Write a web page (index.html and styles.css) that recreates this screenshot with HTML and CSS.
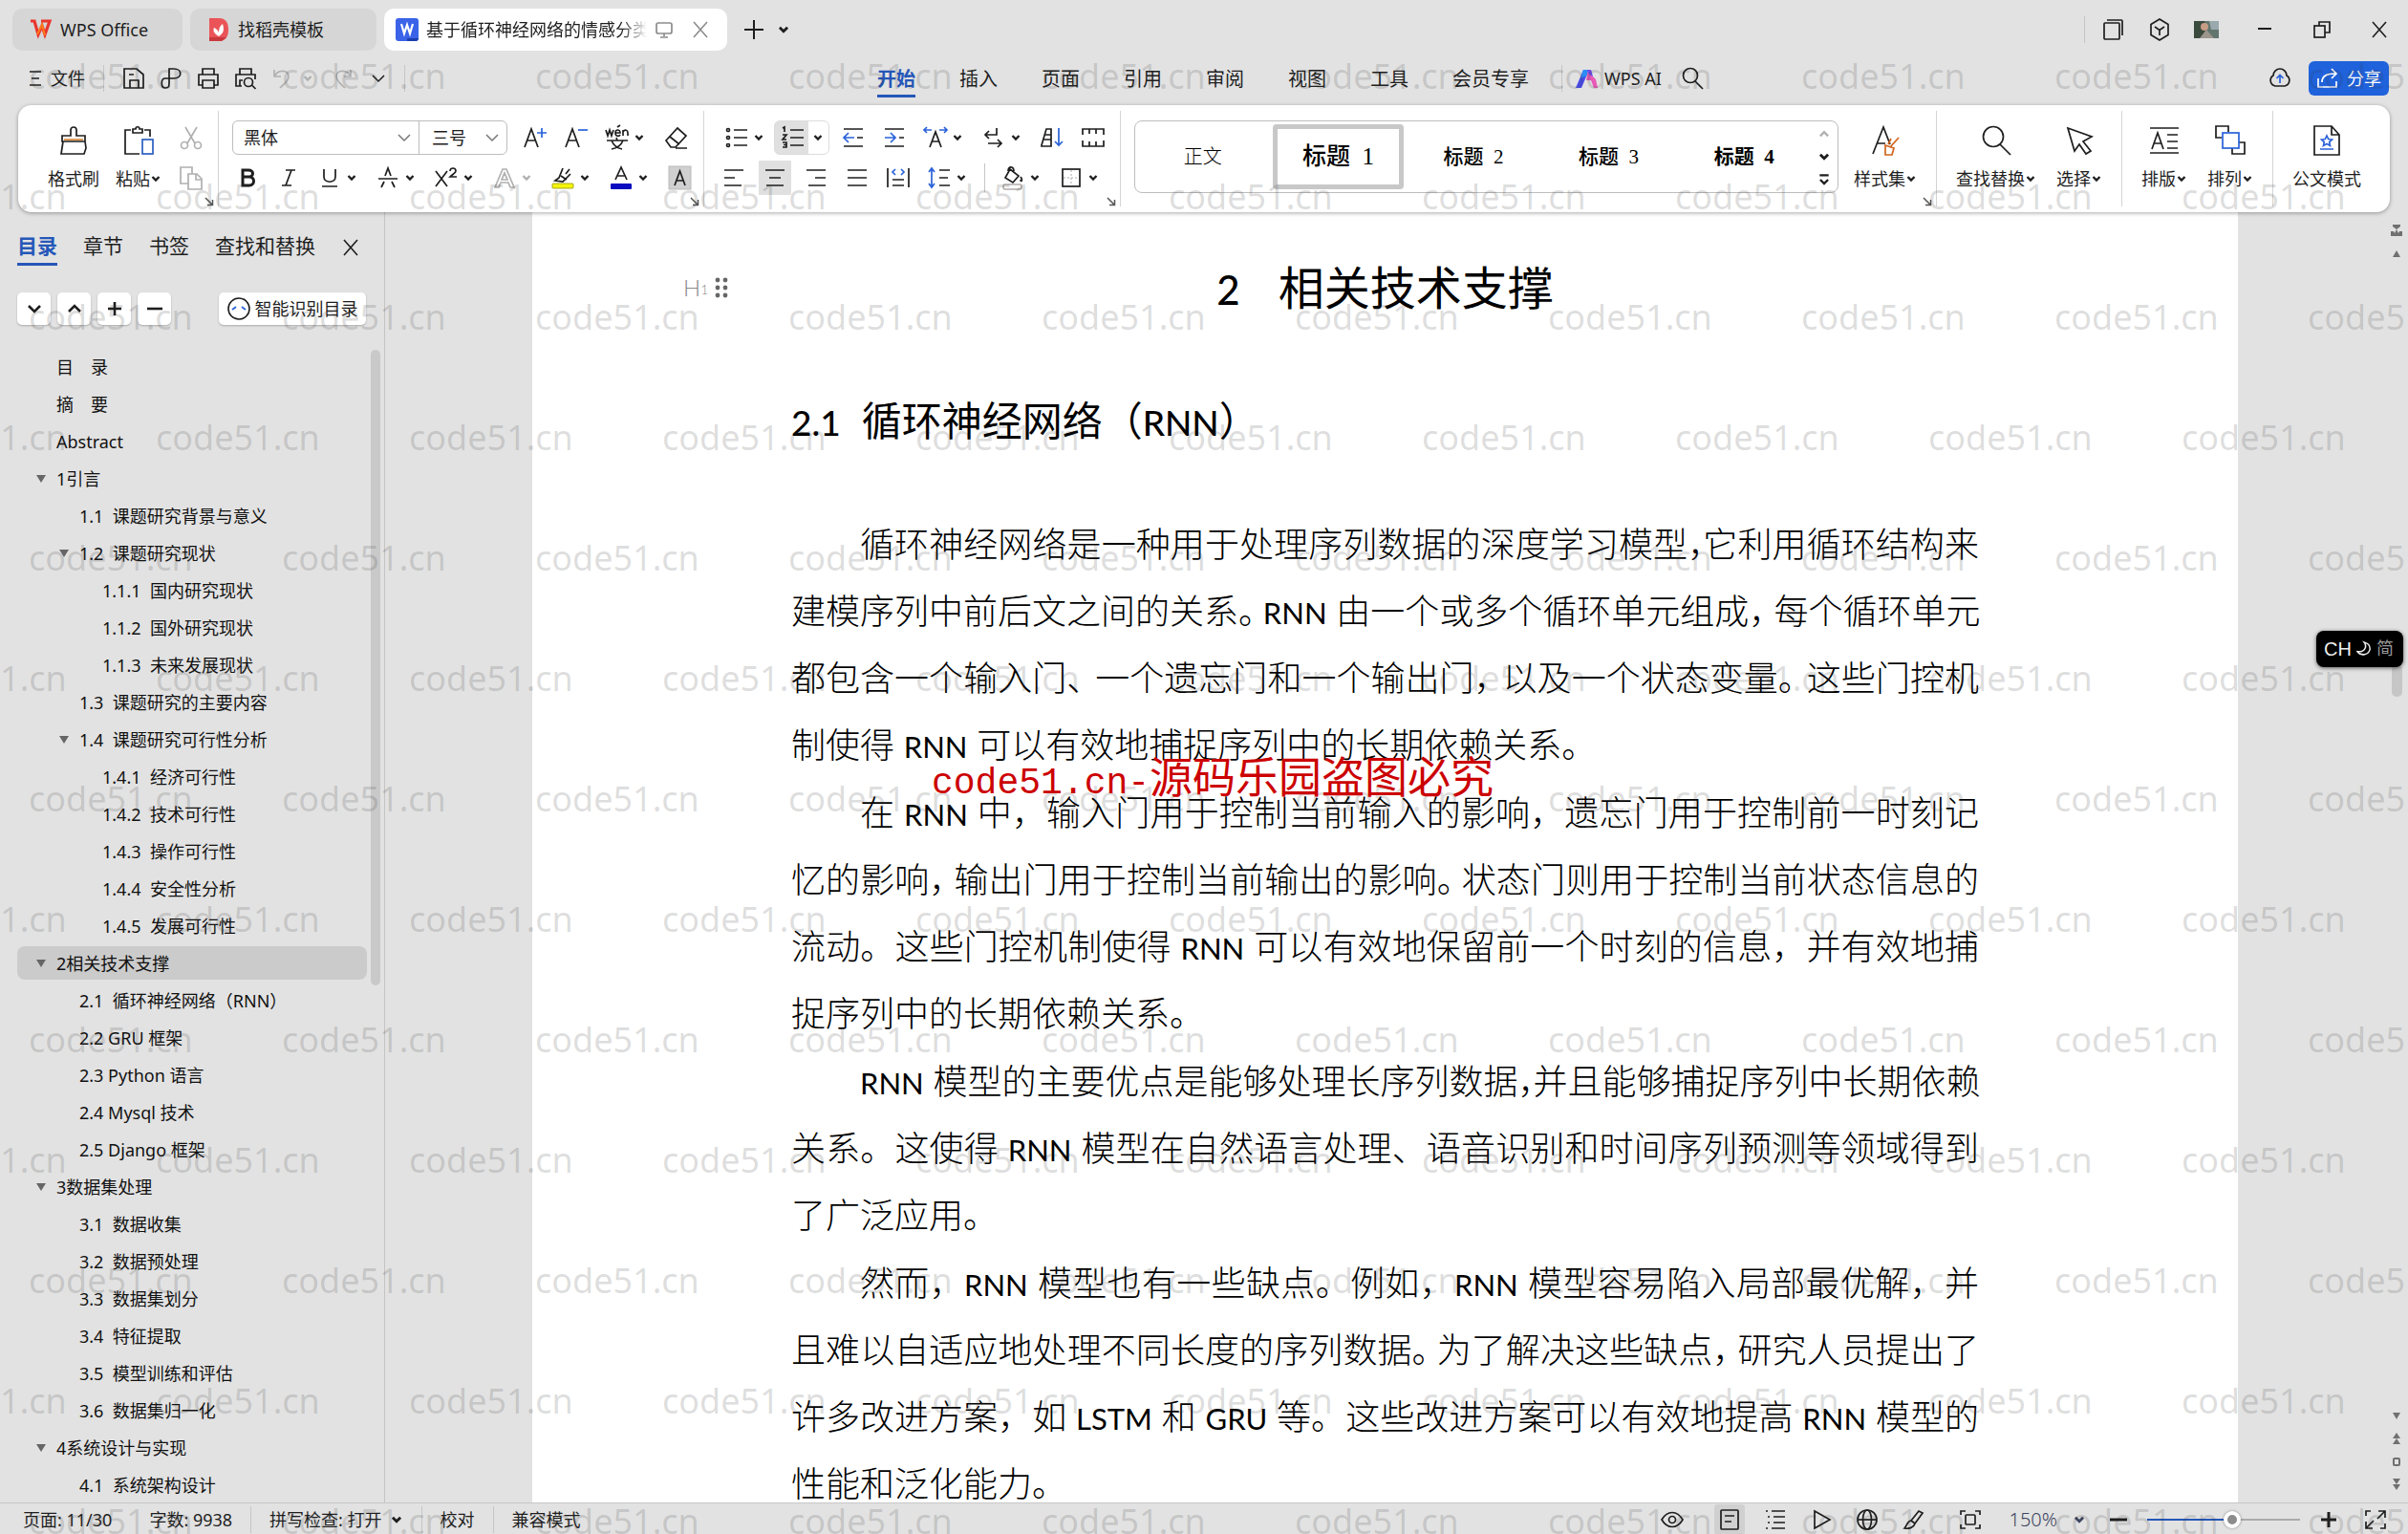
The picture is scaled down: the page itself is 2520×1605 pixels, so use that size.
FILE: index.html
```html
<!DOCTYPE html>
<html lang="zh-CN">
<head>
<meta charset="utf-8">
<title>WPS Office</title>
<link rel="stylesheet" href="styles.css">
</head>
<body>
<svg class="sprite" aria-hidden="true">
  <symbol id="chev" viewBox="0 0 12 12"><path d="M2.500 4l3.500 3.500 3.500-3.500" stroke-width="2.400"/></symbol>
  <symbol id="chev-thin" viewBox="0 0 16 16"><path d="M2 5l6 6 6-6" stroke-width="1.500"/></symbol>
  <symbol id="close" viewBox="0 0 20 20"><path d="M3 2l14 16M17 2L3 18" stroke-width="1.600"/></symbol>
  <symbol id="corner" viewBox="0 0 10 10"><path d="M1 1l7 7M8.500 3v5.500H3" stroke-width="1.500"/></symbol>
</svg>
<div class="app">
  <header class="titlebar">
    <div class="tabs">
      <button class="tab tab-home"><svg class="i24" viewBox="0 0 24 24"><path d="M1 3h4l4 14 4-9 3 9 5-14h-9" stroke="#e8352e" stroke-width="3.200"/><path d="M8 17l5-10 3 11" stroke="#ff7b1c" stroke-width="2"/></svg>WPS Office</button>
      <button class="tab tab-tpl"><svg class="i24" viewBox="0 0 24 24"><path d="M2 0h10c8 0 10 6 10 12s-2 12-10 12H2z" fill="#ea5459" stroke="none"/><path d="M2 20h18l-5 4H2z" fill="#c9383e" stroke="none"/><path d="M12 19C6 16 6 12 7 10c3 1 4 3 5 5 0-4 1-7 4-9 2 6 1 10-4 13z" fill="#fff" stroke="none"/></svg>找稻壳模板</button>
      <button class="tab tab-doc active"><svg class="i24" viewBox="0 0 24 24"><rect width="24" height="24" rx="3" fill="#3a63e8" stroke="none"/><path d="M12 21h12v1l-2 2H12z" fill="#1c3fae" stroke="none"/><path d="M6 6l3 10 3-9 3 9 3-10" stroke="#fff" stroke-width="2.200"/></svg><span class="tab-title">基于循环神经网络的情感分类</span><svg class="i20 dim" viewBox="0 0 20 20"><rect x="2" y="3" width="16" height="11" rx="2"/><path d="M10 14v3M6 18h8"/></svg><svg class="i20 dim tab-close"><use href="#close"/></svg></button>
    </div>
    <button class="plain" aria-label="新建"><svg class="i24" viewBox="0 0 24 24"><path d="M12 2v20M2 12h20" stroke-width="2"/></svg></button>
    <button class="plain new-menu" aria-label="标签列表"><svg class="i14"><use href="#chev"/></svg></button>
    <div class="window-tools">
      <i class="vline"></i>
      <button class="plain" aria-label="窗口"><svg class="i24" viewBox="0 0 24 24"><rect x="2" y="5" width="16" height="17" rx="1"/><path d="M5 2h15q1 0 1 1v15"/></svg></button>
      <button class="plain" aria-label="应用"><svg class="i24" viewBox="0 0 24 24"><path d="M12 1l9 5.500v11L12 23l-9-5.500v-11zM7 9l5 3.500L17 9M12 12.500V18"/></svg></button>
      <svg class="avatar" viewBox="0 0 26 18"><rect width="26" height="18" fill="#62766d" stroke="none"/><path d="M0 0h11l2 8-4 10H0z" fill="#3a4a3d" stroke="none"/><path d="M16 0h10v9h-8z" fill="#9aa9ad" stroke="none"/><circle cx="11" cy="6" r="4" fill="#c79d86" stroke="none"/><path d="M6 18l7-9 8 9z" fill="#9c958c" stroke="none"/></svg>
      <button class="plain win" aria-label="最小化"><svg class="i20" viewBox="0 0 20 20"><path d="M3 9h14" stroke-width="2"/></svg></button>
      <button class="plain win" aria-label="还原"><svg class="i20" viewBox="0 0 20 20"><rect x="2" y="6" width="11" height="12"/><path d="M7 6V2h11v11h-5"/></svg></button>
      <button class="plain win" aria-label="关闭"><svg class="i20"><use href="#close"/></svg></button>
    </div>
  </header>

  <div class="menubar">
    <div class="quick">
      <button class="plain file"><svg class="i16" viewBox="0 0 16 16"><path d="M2 1h12M4 8h8M2 15h12"/></svg>文件</button>
      <i class="vline"></i>
      <button class="plain" aria-label="保存"><svg class="i24" viewBox="0 0 24 24"><path d="M2 2h13l7 6v14H2zM8 22v-8h9v8M7 8h5"/></svg></button>
      <button class="plain" aria-label="输出"><svg class="i24" viewBox="0 0 24 24"><path d="M10 17V2h5c9 0 9 10 0 10h-9c-5 0-5 10 0 10 4 0 4-2 4-5"/></svg></button>
      <button class="plain" aria-label="打印"><svg class="i24" viewBox="0 0 24 24"><path d="M6 8V2h12v6M6 19H2V8h20v11h-4M6 14h12v8H6z"/></svg></button>
      <button class="plain" aria-label="打印预览"><svg class="i24" viewBox="0 0 24 24"><path d="M6 8V2h12v6M8 20H2V8h20v5M6 20v-6h3"/><circle cx="15" cy="16" r="4.500"/><path d="M18.500 19l4 4"/></svg></button>
      <button class="plain faint" aria-label="撤销"><svg class="i24" viewBox="0 0 24 24"><path d="M3 3v7h7M3 10C7 2 18 3 18 10c0 5-4 7-9 12"/></svg></button>
      <button class="plain faint tiny" aria-label="撤销列表"><svg class="i12"><use href="#chev"/></svg></button>
      <button class="plain faint" aria-label="重做"><svg class="i24" viewBox="0 0 24 24"><path d="M21 3v7h-7M21 10C17 2 6 3 6 10c0 5 4 7 9 12"/></svg></button>
      <button class="plain more" aria-label="更多"><svg class="i16"><use href="#chev-thin"/></svg></button>
      <i class="vline"></i>
    </div>
    <nav class="menu">
      <a href="#" class="on">开始</a><a href="#">插入</a><a href="#">页面</a><a href="#">引用</a><a href="#">审阅</a><a href="#">视图</a><a href="#">工具</a><a href="#">会员专享</a>
    </nav>
    <div class="ai">
      <i class="vline"></i>
      <button class="plain ai-btn"><svg class="i24" viewBox="0 0 24 24"><path d="M8 3h6l-8 19H0z" fill="#4b4dee" stroke="none"/><path d="M8 3h6l-2 6-7 3z" fill="#2b8df5" stroke="none"/><path d="M13 3h3l1 6 4 4 2 9h-4l-3-8h-5z" fill="#e95ab8" stroke="none"/><path d="M12 3h4l2 7-4-2z" fill="#6a4df0" stroke="none"/></svg>WPS AI</button>
      <button class="plain" aria-label="搜索"><svg class="i24" viewBox="0 0 24 24"><circle cx="10" cy="9" r="7.500"/><path d="M15 15l8 8"/></svg></button>
    </div>
    <div class="share-box">
      <button class="plain" aria-label="云同步"><svg class="i24" viewBox="0 0 24 24"><path d="M7 20a6 6 0 0 1-2-11 7 7 0 0 1 14 0 6 6 0 0 1-2 11z"/><path d="M12 17V9M8.500 12L12 8.500l3.500 3.500" stroke="#2a62d9"/></svg></button>
      <button class="share"><svg class="i24" viewBox="0 0 24 24"><path d="M2 12v9h19v-6M6 16c0-6 4-9 14-9M16 2l5 5-5 5"/></svg>分享</button>
    </div>
  </div>

  <section class="ribbon">
    <div class="group clip">
      <button class="big"><svg class="i32" viewBox="0 0 32 32"><path d="M13 11V5a3 3 0 0 1 6 0v6h9v6H4v-6zM5 17L3 30h24l2-6-1-7"/><path d="M6 15h20" stroke="#d98b3f"/></svg><span>格式刷</span></button>
      <button class="big"><svg class="i32" viewBox="0 0 32 32"><path d="M8 5H2v25h15M22 5h6v7M10 8V4h3c0-3 4-3 4 0h3v4z"/><rect x="20" y="15" width="11" height="15" stroke="#2b5fc0"/></svg><span>粘贴<svg class="i12"><use href="#chev"/></svg></span></button>
      <div class="stack">
        <button class="tool faint" aria-label="剪切"><svg viewBox="0 0 28 28"><path d="M8 3l10 17M20 3L10 20"/><circle cx="7" cy="22" r="3.500"/><circle cx="21" cy="22" r="3.500"/></svg></button>
        <button class="tool faint" aria-label="复制"><svg viewBox="0 0 28 28"><path d="M11 20H3V3h12v7M11 10h9l5 5v11H11zM19 10v6h6"/></svg></button>
      </div>
      <svg class="launcher"><use href="#corner"/></svg>
    </div>

    <div class="group fonts">
      <div class="tools">
        <div class="combo">
          <label class="combo-face"><input type="text" value="黑体" aria-label="字体"><svg class="i16 mid"><use href="#chev-thin"/></svg></label>
          <label class="combo-size"><input type="text" value="三号" aria-label="字号"><svg class="i16 mid"><use href="#chev-thin"/></svg></label>
        </div>
        <button class="tool" aria-label="增大字号"><svg viewBox="0 0 28 28"><path d="M3 24l7-19 7 19M6 17h8"/><path d="M21 4v10M16 9h10" stroke="#2a62d9"/></svg></button>
        <button class="tool" aria-label="减小字号"><svg viewBox="0 0 28 28"><path d="M3 24l7-19 7 19M6 17h8"/><path d="M16 6h10" stroke="#2a62d9"/></svg></button>
        <button class="tool menu-tool" aria-label="拼音指南"><svg viewBox="0 0 28 28"><path d="M2 6l2 6 2-6 2 6 2-6M12 9h5c0-4-5-4-5 0s4 4 5 2M14 3l3-2M20 12V6M20 8c2-3 5-2 5 1v3M3 17h22M13 14l1 3M8 17c2 5 6 8 11 9M20 17c-2 5-6 8-12 9"/></svg><svg class="i12"><use href="#chev"/></svg></button>
        <button class="tool" aria-label="清除格式"><svg viewBox="0 0 28 28"><path d="M4 17L16 4l9 8-11 12H9zM8 13l10 8M14 25h12"/></svg></button>
      </div>
      <div class="tools">
        <button class="tool" aria-label="加粗"><svg viewBox="0 0 28 28"><path d="M9 6h6c6 0 6 7 0 7H9zM9 13h7c6 0 6 9 0 9H9z" stroke-width="3"/></svg></button>
        <button class="tool" aria-label="倾斜"><svg viewBox="0 0 28 28"><path d="M11 6h10M7 22h10M17 6l-6 16"/></svg></button>
        <button class="tool menu-tool" aria-label="下划线"><svg viewBox="0 0 28 28"><path d="M8 5v8c0 7 12 7 12 0V5M6 23h16"/></svg><svg class="i12"><use href="#chev"/></svg></button>
        <button class="tool menu-tool" aria-label="删除线"><svg viewBox="0 0 28 28"><path d="M4 15h20M11 12l3-8 3 8M10 18l-3 6M18 18l3 6"/></svg><svg class="i12"><use href="#chev"/></svg></button>
        <button class="tool menu-tool" aria-label="上标"><svg viewBox="0 0 28 28"><path d="M3 7l12 16M15 7L3 23M18 7c0-4 6-4 6 0 0 2-3 3-6 6h7"/></svg><svg class="i12"><use href="#chev"/></svg></button>
        <button class="tool menu-tool faint" aria-label="文字效果"><svg viewBox="0 0 28 28"><path d="M4 24l8-19h4l8 19h-4l-2-5h-8l-2 5zM11 16h6l-3-7z"/></svg><svg class="i12"><use href="#chev"/></svg></button>
        <button class="tool menu-tool" aria-label="突出显示"><svg viewBox="0 0 28 28"><path d="M14 4L10 14l-4 3 8 1 8-8M12 12l6 4M21 5l-4 5"/><rect x="3" y="20" width="22" height="5" rx="1" fill="#f5f50a" stroke="#a8a81c" stroke-width="1"/></svg><svg class="i12"><use href="#chev"/></svg></button>
        <button class="tool menu-tool" aria-label="字体颜色"><svg viewBox="0 0 28 28"><path d="M8 16l6-13 6 13M10 12h8"/><rect x="3" y="20" width="22" height="6" rx="1" fill="#0a0ac0" stroke="none"/></svg><svg class="i12"><use href="#chev"/></svg></button>
        <button class="tool" aria-label="字符底纹"><svg viewBox="0 0 28 28"><rect x="3" y="2" width="23" height="24" fill="#d0d0d0" stroke="#bbb" stroke-width="1"/><path d="M9 22l5.500-15L20 22M11 17h7"/></svg></button>
      </div>
      <svg class="launcher"><use href="#corner"/></svg>
    </div>

    <div class="group para">
      <div class="tools">
        <button class="tool menu-tool" aria-label="项目符号"><svg viewBox="0 0 28 28"><circle cx="5" cy="6" r="1.500"/><circle cx="5" cy="14" r="1.500"/><circle cx="5" cy="22" r="1.500"/><path d="M11 6h14M11 14h14M11 22h14"/></svg><svg class="i12"><use href="#chev"/></svg></button>
        <button class="tool menu-tool boxed" aria-label="编号"><svg viewBox="0 0 28 28"><path d="M3 4l2-1v5M3 11h4l-4 5h4M3 19h4v5H3M4 21.500h3M11 6h14M11 14h14M11 22h14"/></svg><svg class="i12"><use href="#chev"/></svg></button>
        <button class="tool" aria-label="减少缩进"><svg viewBox="0 0 28 28"><path d="M4 5h20M4 23h20M18 14h6"/><path d="M15 14H4M9 9l-5 5 5 5" stroke="#2a62d9"/></svg></button>
        <button class="tool" aria-label="增加缩进"><svg viewBox="0 0 28 28"><path d="M4 5h20M4 23h20M19 14h5"/><path d="M4 14h11M10 9l5 5-5 5" stroke="#2a62d9"/></svg></button>
        <button class="tool menu-tool" aria-label="中文版式"><svg viewBox="0 0 28 28"><path d="M8 24l6-16 6 16M10 18h8"/><path d="M2 6h8M5 3L2 6l3 3M18 6h8M23 3l3 3-3 3" stroke="#2a62d9"/></svg><svg class="i12"><use href="#chev"/></svg></button>
        <button class="tool menu-tool" aria-label="换行"><svg viewBox="0 0 28 28"><path d="M17 4v7H5M9 7l-4 4 4 4M8 20h14M18 16l4 4-4 4"/></svg><svg class="i12"><use href="#chev"/></svg></button>
        <button class="tool" aria-label="排序"><svg viewBox="0 0 28 28"><path d="M3 22L8 5h5v18H3zM6 11h7M5 16h8"/><path d="M21 4v18M17 18l4 4 4-4" stroke="#2a62d9"/></svg></button>
        <button class="tool" aria-label="制表位"><svg viewBox="0 0 28 28"><path d="M3 11V5h22v6M10 5v5M17 5v5M3 17v6h22v-6M10 23v-5M17 23v-5"/></svg></button>
      </div>
      <div class="tools">
        <button class="tool" aria-label="左对齐"><svg viewBox="0 0 28 28"><path d="M4 6h20M4 14h11M4 22h18"/></svg></button>
        <button class="tool pressed" aria-label="居中"><svg viewBox="0 0 28 28"><path d="M4 6h20M8 14h12M5 22h18"/></svg></button>
        <button class="tool" aria-label="右对齐"><svg viewBox="0 0 28 28"><path d="M4 6h20M13 14h11M6 22h18"/></svg></button>
        <button class="tool" aria-label="两端对齐"><svg viewBox="0 0 28 28"><path d="M4 6h20M4 14h20M4 22h20"/></svg></button>
        <button class="tool" aria-label="分散对齐"><svg viewBox="0 0 28 28"><path d="M3 4v20M25 4v20M8 16h12M8 22h12"/><path d="M11 5L8 8l3 3M17 5l3 3-3 3" stroke="#2a62d9"/></svg></button>
        <button class="tool menu-tool" aria-label="行距"><svg viewBox="0 0 28 28"><path d="M14 6h11M14 14h9M14 22h11"/><path d="M6 4v20M3 8l3-4 3 4M3 20l3 4 3-4" stroke="#2a62d9"/></svg><svg class="i12"><use href="#chev"/></svg></button>
        <i class="vline short"></i>
        <button class="tool menu-tool" aria-label="底纹"><svg viewBox="0 0 28 28"><path d="M11 5l9 7-6 7-8-5zM9 7c0-6 6-5 6 0M22 13c3 4 0 6 0 3"/><rect x="4" y="21" width="19" height="5" rx="1" stroke="#8a8080" stroke-width="1"/></svg><svg class="i12"><use href="#chev"/></svg></button>
        <button class="tool menu-tool" aria-label="边框"><svg viewBox="0 0 28 28"><rect x="5" y="5" width="18" height="18"/><path d="M14 6v16M6 14h16" stroke-dasharray="2 2" stroke="#aaa" stroke-width="1"/></svg><svg class="i12"><use href="#chev"/></svg></button>
      </div>
      <svg class="launcher"><use href="#corner"/></svg>
    </div>

    <div class="group styles">
      <div class="gallery">
        <button class="style normal">正文</button>
        <button class="style h-one selected">标题&nbsp; 1</button>
        <button class="style h-two">标题&nbsp; 2</button>
        <button class="style h-two">标题&nbsp; 3</button>
        <button class="style h-two heavy">标题&nbsp; 4</button>
        <div class="arrows">
          <svg class="i14 faint" viewBox="0 0 12 12"><path d="M2.500 8L6 4.500 9.500 8" stroke-width="2"/></svg>
          <svg class="i14"><use href="#chev"/></svg>
          <svg class="i14" viewBox="0 0 12 12"><path d="M2 2h8M2.500 6L6 9.500 9.500 6" stroke-width="2"/></svg>
        </div>
      </div>
      <button class="big"><svg class="i32" viewBox="0 0 32 32"><path d="M3 30L14 2l7 18M7 19h9"/><path d="M30 13l-9 10M22 14l-3 6M16 21l9 3-2 7h-7z" stroke="#d0641c"/></svg><span>样式集<svg class="i12"><use href="#chev"/></svg></span></button>
      <svg class="launcher"><use href="#corner"/></svg>
    </div>

    <div class="group">
      <button class="big"><svg class="i32" viewBox="0 0 32 32"><circle cx="13" cy="12" r="10.500"/><path d="M20 20l11 11"/></svg><span>查找替换<svg class="i12"><use href="#chev"/></svg></span></button>
      <button class="big"><svg class="i32" viewBox="0 0 32 32"><path d="M4 3l25 9-9 5 8 10-5 3-7-10-5 7z"/></svg><span>选择<svg class="i12"><use href="#chev"/></svg></span></button>
    </div>
    <div class="group">
      <button class="big"><svg class="i32" viewBox="0 0 32 32"><path d="M1 3h30M1 29h30M3 25l6-17 6 17M5 19h8M19 10h11M19 17h11M19 24h11"/></svg><span>排版<svg class="i12"><use href="#chev"/></svg></span></button>
      <button class="big"><svg class="i32" viewBox="0 0 32 32"><path d="M7 13H1V1h13v6M25 18h6v12H18v-6"/><rect x="8" y="8" width="17" height="16" stroke="#2a62d9"/></svg><span>排列<svg class="i12"><use href="#chev"/></svg></span></button>
    </div>
    <div class="group last">
      <button class="big"><svg class="i32" viewBox="0 0 32 32"><path d="M3 1h18l8 9v21H3zM21 1v9h8"/><path d="M16 11l1.700 3.500 3.800.500-2.800 2.600.800 3.800-3.500-1.900-3.500 1.900.800-3.800-2.800-2.600 3.800-.500zM9 25h14" stroke="#2a62d9"/></svg><span>公文模式</span></button>
    </div>
  </section>

  <div class="workspace">
    <aside class="sidebar">
      <div class="side-tabs">
        <a href="#" class="on">目录</a><a href="#">章节</a><a href="#">书签</a><a href="#">查找和替换</a>
        <button class="plain" aria-label="关闭窗格"><svg class="i20"><use href="#close"/></svg></button>
      </div>
      <div class="side-tools">
        <button aria-label="展开"><svg class="i16" viewBox="0 0 16 16"><path d="M2 5l6 6 6-6"/></svg></button>
        <button aria-label="折叠"><svg class="i16" viewBox="0 0 16 16"><path d="M2 11l6-6 6 6"/></svg></button>
        <button aria-label="升级"><svg class="i16" viewBox="0 0 16 16"><path d="M8 1v14M1 8h14"/></svg></button>
        <button aria-label="降级"><svg class="i16" viewBox="0 0 16 16"><path d="M0 8h16"/></svg></button>
        <button class="smart"><svg class="i24" viewBox="0 0 24 24"><circle cx="12" cy="12" r="11" stroke-width="1.600"/><path d="M5 13l4-3M15 10l4 3" stroke="#2a62d9" stroke-width="1.800"/></svg>智能识别目录</button>
      </div>
      <div class="outline">
        <ul class="tree">
          <li>目　录</li>
          <li>摘　要</li>
          <li>Abstract</li>
          <li class="open">1引言</li>
          <li class="l2">1.1  课题研究背景与意义</li>
          <li class="l2 open">1.2  课题研究现状</li>
          <li class="l3">1.1.1  国内研究现状</li>
          <li class="l3">1.1.2  国外研究现状</li>
          <li class="l3">1.1.3  未来发展现状</li>
          <li class="l2">1.3  课题研究的主要内容</li>
          <li class="l2 open">1.4  课题研究可行性分析</li>
          <li class="l3">1.4.1  经济可行性</li>
          <li class="l3">1.4.2  技术可行性</li>
          <li class="l3">1.4.3  操作可行性</li>
          <li class="l3">1.4.4  安全性分析</li>
          <li class="l3">1.4.5  发展可行性</li>
          <li class="open current">2相关技术支撑</li>
          <li class="l2">2.1  循环神经网络（RNN）</li>
          <li class="l2">2.2 GRU 框架</li>
          <li class="l2">2.3 Python 语言</li>
          <li class="l2">2.4 Mysql 技术</li>
          <li class="l2">2.5 Django 框架</li>
          <li class="open">3数据集处理</li>
          <li class="l2">3.1  数据收集</li>
          <li class="l2">3.2  数据预处理</li>
          <li class="l2">3.3  数据集划分</li>
          <li class="l2">3.4  特征提取</li>
          <li class="l2">3.5  模型训练和评估</li>
          <li class="l2">3.6  数据集归一化</li>
          <li class="open">4系统设计与实现</li>
          <li class="l2">4.1  系统架构设计</li>
        </ul>
        <div class="side-scroll"></div>
      </div>
    </aside>

    <main class="canvas">
      <article class="page">
        <div class="marker">H<small>1</small><svg viewBox="0 0 14 22"><circle cx="3" cy="3" r="2.400"/><circle cx="11" cy="3" r="2.400"/><circle cx="3" cy="11" r="2.400"/><circle cx="11" cy="11" r="2.400"/><circle cx="3" cy="19" r="2.400"/><circle cx="11" cy="19" r="2.400"/></svg></div>
        <h1><b>2</b>相关技术支撑</h1>
        <h2><b>2.1</b>循环神经网络（<b>RNN</b>）</h2>
        <p>
          <span class="ln first">循环神经网络是一种用于处理序列数据的深度学习模型<i class="half">，</i>它利用循环结构来</span>
          <span class="ln">建模序列中前后文之间的关系<i class="half">。</i> <b>RNN</b> 由一个或多个循环单元组成<i class="snug">，</i>每个循环单元</span>
          <span class="ln">都包含一个输入门<i class="slim">、</i>一个遗忘门和一个输出门<i class="slim">，</i>以及一个状态变量<i class="slim">。</i>这些门控机</span>
          <span class="ln end">制使得 <b>RNN</b> 可以有效地捕捉序列中的长期依赖关系。</span>
        </p>
        <p>
          <span class="ln first">在 <b>RNN</b> 中，输入门用于控制当前输入的影响，遗忘门用于控制前一时刻记</span>
          <span class="ln">忆的影响<i class="snug">，</i>输出门用于控制当前输出的影响<i class="snug">。</i>状态门则用于控制当前状态信息的</span>
          <span class="ln">流动。这些门控机制使得 <b>RNN</b> 可以有效地保留前一个时刻的信息，并有效地捕</span>
          <span class="ln end">捉序列中的长期依赖关系。</span>
        </p>
        <p>
          <span class="ln first"><b>RNN</b> 模型的主要优点是能够处理长序列数据<i class="half">，</i>并且能够捕捉序列中长期依赖</span>
          <span class="ln">关系。这使得 <b>RNN</b> 模型在自然语言处理、语音识别和时间序列预测等领域得到</span>
          <span class="ln end">了广泛应用。</span>
        </p>
        <p>
          <span class="ln first">然而，<b>RNN</b> 模型也有一些缺点。例如，<b>RNN</b> 模型容易陷入局部最优解，并</span>
          <span class="ln">且难以自适应地处理不同长度的序列数据<i class="snug">。</i>为了解决这些缺点<i class="snug">，</i>研究人员提出了</span>
          <span class="ln">许多改进方案，如 <b>LSTM</b> 和 <b>GRU</b> 等。这些改进方案可以有效地提高 <b>RNN</b> 模型的</span>
          <span class="ln end">性能和泛化能力。</span>
        </p>
      </article>
    </main>

    <div class="scrollbar">
      <svg class="i12 solid" viewBox="0 0 12 12"><path d="M2 0h8v2L6 5 2 2zM0 7h3l1 2 2-4 2 4 1-2h3v5H0z"/></svg>
      <svg class="i12 solid" viewBox="0 0 12 12"><path d="M6 3l4 7H2z"/></svg>
      <div class="track"><div class="thumb"></div></div>
      <svg class="i12 solid" viewBox="0 0 12 12"><path d="M2 3h8l-4 7z"/></svg>
      <svg class="i12 solid" viewBox="0 0 12 12"><path d="M6 0l4 6H2zM6 6l4 6H2z"/></svg>
      <svg class="i12" viewBox="0 0 12 12"><rect x="3" y="3" width="6" height="7" rx="1" stroke="#707070" stroke-width="2"/></svg>
      <svg class="i12 solid" viewBox="0 0 12 12"><path d="M2 0h8L6 6zM2 6h8l-4 6z"/></svg>
    </div>
  </div>

  <footer class="status">
    <span class="page-no">页面: 11/30</span>
    <span class="words">字数: 9938</span>
    <i class="vline"></i>
    <button class="plain spell">拼写检查: 打开<svg class="i14"><use href="#chev"/></svg></button>
    <i class="vline"></i>
    <button class="plain">校对</button>
    <i class="vline"></i>
    <button class="plain">兼容模式</button>
    <div class="views">
      <button class="plain" aria-label="护眼"><svg class="i24" viewBox="0 0 24 24"><path d="M1 12C7 2 17 2 23 12 17 22 7 22 1 12z"/><circle cx="12" cy="12" r="3.500"/></svg></button>
      <button class="plain pressed" aria-label="页面视图"><svg class="i24" viewBox="0 0 24 24"><rect x="3" y="2" width="18" height="20" rx="1"/><path d="M7 8h10M7 14h7"/></svg></button>
      <button class="plain" aria-label="大纲"><svg class="i24" viewBox="0 0 24 24"><path d="M8 3h14M10 9h12M10 15h12M8 21h14M2 3h2M4 9h2M4 15h2M2 21h2"/></svg></button>
      <button class="plain" aria-label="阅读"><svg class="i24" viewBox="0 0 24 24"><path d="M5 3l16 9-16 9z"/></svg></button>
      <button class="plain" aria-label="网页"><svg class="i24" viewBox="0 0 24 24"><circle cx="12" cy="12" r="10"/><ellipse cx="12" cy="12" rx="4.500" ry="10"/><path d="M2 12h20"/></svg></button>
      <button class="plain" aria-label="写作"><svg class="i24" viewBox="0 0 24 24"><path d="M10 13L18 3l4 2-8 11zM10 13c-4 0-4 5-7 8 5 1 10-1 11-5"/></svg></button>
      <button class="plain fit" aria-label="适应"><svg class="i24" viewBox="0 0 24 24"><path d="M2 7V3h5M17 3h5v4M22 17v4h-5M7 21H2v-4"/><rect x="7" y="7" width="10" height="10" rx="1"/></svg></button>
      <button class="plain zoom">150%<svg class="i14"><use href="#chev"/></svg></button>
      <button class="plain" aria-label="缩小"><svg class="i20" viewBox="0 0 20 20"><path d="M1 10h18" stroke-width="3"/></svg></button>
      <input type="range" min="0" max="100" value="56" aria-label="缩放">
      <button class="plain" aria-label="放大"><svg class="i20" viewBox="0 0 20 20"><path d="M10 2v16M2 10h16" stroke-width="3"/></svg></button>
      <button class="plain full" aria-label="全屏"><svg class="i24" viewBox="0 0 24 24"><path d="M2 8V3h5M15 3h7v7M22 16v5h-5M9 21H2v-7M22 3l-8 8M2 21l8-8"/></svg></button>
    </div>
  </footer>
</div>

<div class="watermark" aria-hidden="true"></div>
<div class="notice">code51.cn-<span>源码乐园盗图必究</span></div>
<div class="ime">CH<svg viewBox="0 0 18 18"><path d="M9 1c4 5 1 12-8 11 4 6 14 4 15-3 0-4-3-7-7-8z"/></svg><span>简</span></div>
<script src="watermark.js"></script>
</body>
</html>
```
FILE: styles.css
```css
* { box-sizing: border-box; }
body {
  margin: 0;
  position: relative;
  height: 100vh;
  overflow: hidden;
  background: #e2e2e2;
  color: #1e1e1e;
  font: 18px/24px "Noto Sans", "Noto Sans CJK SC", sans-serif;
}
button, input { font: inherit; color: inherit; margin: 0; padding: 0; border: 0; background: none; }
a { color: inherit; text-decoration: none; }
i { font-style: normal; }
svg { fill: none; stroke: currentColor; stroke-width: 1.7; flex: none; display: block; }
.sprite { position: absolute; width: 0; height: 0; }
.i12 { width: 12px; height: 12px; }
.i14 { width: 14px; height: 14px; }
.i16 { width: 16px; height: 16px; }
.i20 { width: 20px; height: 20px; }
.i24 { width: 24px; height: 24px; }
.i32 { width: 32px; height: 32px; }
.dim { color: #8c8c8c; }
.mid { color: #777; }
.faint { color: #b0b0b0; }
.solid { fill: #707070; stroke: none; }
.plain { display: flex; align-items: center; white-space: nowrap; }
.vline { flex: none; width: 1px; height: 28px; background: #c6c6c6; }

.app { display: flex; flex-direction: column; height: 100%; }

/* title bar */
.titlebar { display: flex; align-items: center; height: 62px; padding: 0 20px 0 13px; flex: none; }
.tabs { display: flex; gap: 8px; }
.tab { display: flex; align-items: center; gap: 8px; height: 44px; padding: 0 18px; border-radius: 10px; background: #d6d6d6; white-space: nowrap; }
.tab-home { width: 178px; }
.tab-tpl { width: 195px; }
.tab-doc { width: 359px; padding: 0 12px; }
.tab.active { background: #fff; }
.tab-title { width: 231px; overflow: hidden; text-align: left; -webkit-mask-image: linear-gradient(90deg, #000 88%, transparent); mask-image: linear-gradient(90deg, #000 88%, transparent); }
.tab-close { margin-left: 10px; }
.titlebar > .plain { margin-left: 16px; }
.titlebar > .new-menu { margin-left: 12px; }
.window-tools { display: flex; align-items: center; margin-left: auto; gap: 24px; }
.window-tools .vline { margin-right: -6px; }
.window-tools .win { margin-left: 16px; }
.avatar { width: 26px; height: 18px; }
.window-tools .avatar + .win { margin-left: 14px; }

/* menu bar */
.menubar { display: flex; align-items: center; height: 40px; padding: 0 20px 0 29px; flex: none; }
.quick { display: flex; align-items: center; gap: 15px; width: 403px; }
.quick .vline { margin: 0 4px; }
.quick .file { gap: 8px; }
.quick .tiny { margin: 0 3px 0 -7px; }
.quick .more { margin-left: 3px; }
.menu { display: flex; gap: 46px; margin-left: 486px; font-size: 20px; }
.menu a { padding: 6px 0 2px; border-bottom: 3px solid transparent; line-height: 28px; }
.menu .on, .side-tabs .on { color: #2557b8; font-weight: 700; border-color: #2557b8; }
.ai { display: flex; align-items: center; gap: 20px; margin-left: 34px; }
.ai-btn { gap: 6px; margin-left: -6px; }
.share-box { display: flex; align-items: center; gap: 18px; margin-left: auto; }
.share { display: flex; align-items: center; gap: 8px; height: 36px; padding: 0 8px; border-radius: 6px; background: #1f62dc; color: #fff; white-space: nowrap; }

/* ribbon */
.ribbon { position: relative; z-index: 1; display: flex; height: 112px; margin: 8px 19px 0; padding: 6px 0; border-radius: 14px; background: #fff; box-shadow: 0 1px 4px rgba(0, 0, 0, .35); flex: none; }
.group { position: relative; display: flex; gap: 21px; padding: 0 20px; border-right: 1px solid #d4d4d4; flex: none; }
.group.last { border: 0; padding-right: 30px; }
.clip { padding: 0 14px 0 31px; gap: 17px; }
.stack { display: flex; flex-direction: column; gap: 6px; padding-top: 10px; }
.fonts, .para { flex-direction: column; gap: 6px; padding: 10px 11px 0 14px; }
.para { padding: 10px 14px 0 17px; }
.launcher { position: absolute; right: 4px; bottom: 0; width: 10px; height: 10px; color: #555; }
.tools { display: flex; align-items: center; gap: 15px; height: 36px; }
.fonts .tools + .tools { padding-left: 2px; }
.para .tools:first-child { padding-left: 3px; }
.tool { display: flex; align-items: center; width: 28px; height: 36px; }
.tool > svg:first-child { width: 28px; height: 28px; }
.menu-tool { width: 46px; gap: 3px; }
.boxed { width: 58px; margin: 0 -4px 0 -8px; padding-left: 5px; gap: 6px; border: 1px solid #dcdcdc; border-radius: 6px; background: linear-gradient(90deg, #e0e0e0 35px, #fff 35px); }
.pressed { background: #d0d0d0; box-shadow: 0 0 0 4px #d0d0d0; border-radius: 1px; }
.tool.pressed { background: #e0e0e0; box-shadow: -3px 0 #e0e0e0, 3px 0 #e0e0e0; }
.vline.short { height: 30px; }
.combo { display: flex; flex: none; width: 288px; height: 36px; border: 1px solid #bdbdbd; border-radius: 6px; }
.combo label { display: flex; align-items: center; min-width: 0; padding: 0 7px 0 11px; }
.combo input { width: 0; flex: 1; min-width: 0; }
.combo .combo-face { flex: 1; }
.combo .combo-size { flex: none; width: 92px; padding-left: 13px; border-left: 1px solid #bdbdbd; }
.big { display: flex; flex-direction: column; align-items: center; gap: 12px; padding-top: 15px; white-space: nowrap; }
.big span { display: flex; align-items: center; }
.styles { flex: 1; gap: 16px; padding: 0 20px 0 14px; }
.gallery { display: flex; flex: 1; align-items: center; height: 76px; margin-top: 10px; border: 1px solid #bdbdbd; border-radius: 8px; }
.style { flex: 1; height: 68px; margin: 0 2px; border: 5px solid transparent; white-space: nowrap; font-family: "Liberation Serif", "Noto Sans CJK SC", serif; color: #000; }
.normal { font-size: 20px; font-weight: 300; }
.h-one { font-size: 25px; font-weight: 500; }
.h-two { font-size: 21px; font-weight: 500; }
.heavy { font-weight: 700; }
.selected { border-color: #c8c8c8; border-radius: 4px; }
.arrows { display: flex; flex-direction: column; justify-content: space-between; align-items: center; width: 27px; height: 62px; }

/* workspace */
.workspace { display: flex; flex: 1; min-height: 0; }
.sidebar { display: flex; flex-direction: column; width: 403px; flex: none; border-right: 1px solid #c4c4c4; }
.side-tabs { display: flex; align-items: center; gap: 27px; padding: 17px 0 0 18px; font-size: 21px; }
.side-tabs a { padding: 4px 0; line-height: 28px; border-bottom: 3px solid transparent; white-space: nowrap; }
.side-tools { display: flex; gap: 7px; padding: 28px 19px 0 18px; }
.side-tools button { display: flex; align-items: center; justify-content: center; width: 35px; height: 34px; border-radius: 5px; background: #fff; box-shadow: 0 1px 2px rgba(0, 0, 0, .25); white-space: nowrap; }
.side-tools button svg { stroke-width: 2.6; }
.side-tools .smart { width: 154px; gap: 5px; margin-left: auto; }
.outline { display: flex; flex: 1; min-height: 0; margin-top: 26px; }
.tree { flex: 1; overflow: hidden; margin: 0; padding: 0 0 0 18px; list-style: none; color: #111; }
.tree li { display: flex; align-items: center; height: 35px; margin: 0 0 4px; padding-left: 41px; border-radius: 8px; white-space: pre; }
.tree .l2 { padding-left: 65px; }
.tree .l3 { padding-left: 89px; }
.tree .open::before { content: ""; width: 0; margin: 0 11px 0 -21px; border: 5px solid transparent; border-top: 8px solid #666; border-bottom: 0; }
.tree .current { background: #cbcbcb; }
.side-scroll { width: 10px; height: 665px; margin: 0 4px; border-radius: 5px; background: #c9c9c9; }

.canvas { flex: 1; min-width: 0; overflow: hidden; }
.page { position: relative; max-width: 1785px; min-height: 100%; margin: 0 auto; padding: 44px 271px 0; background: #fff; color: #000; font-family: Lato, "Noto Sans CJK SC", sans-serif; }
.marker { position: absolute; left: 158px; top: 67px; display: flex; align-items: center; color: #8a8a8a; font: 300 24px/24px Lato, sans-serif; }
.marker small { align-self: flex-end; font-size: 14px; line-height: 20px; }
.marker svg { width: 14px; height: 22px; margin-left: 7px; fill: #666; stroke: none; }
h1, h2 { margin: 0; line-height: 70px; font-weight: 400; }
h1 { font-size: 48px; text-align: center; }
h1 b { margin-right: 40px; font-size: 42px; }
h2 { margin-top: 67px; font-size: 42px; }
h2 b { font-size: 37px; }
h2 b:first-child { margin-right: 22px; }
.page b { font-weight: 500; }
.page p { margin: 0 0 1px; font-size: 36px; line-height: 70px; font-weight: 300; }
.page p b { font-size: 31px; font-weight: 400; }
.page h2 + p { margin-top: 57px; }
.ln { display: block; text-align-last: justify; white-space: nowrap; height: 70px; }
.first { padding-left: 72px; }
.end { text-align-last: left; }
.half { margin-right: -20px; }
.snug { margin-right: -10px; }
.slim { margin-right: -6px; }

.scrollbar { display: flex; flex-direction: column; align-items: center; gap: 12px; width: 24px; padding: 13px 0 13px; flex: none; }
.track { flex: 1; display: flex; flex-direction: column; align-items: center; }
.thumb { width: 11px; height: 34px; margin-top: 412px; border-radius: 5px; background: #c6c6c6; }

/* status bar */
.status { display: flex; align-items: center; height: 33px; padding: 2px 22px 0 24px; border-top: 1px solid #c6c6c6; flex: none; gap: 19px; white-space: nowrap; overflow: hidden; }
.words { margin-left: 20px; }
.spell { gap: 8px; }
.views { display: flex; align-items: center; gap: 24px; margin-left: auto; }
.views .pressed { margin-left: 12px; }
.views .fit { margin-left: 12px; }
.views .zoom { gap: 16px; margin-left: 5px; font-size: 20px; color: #3f4660; font-weight: 300; }
.views .full { margin-left: 3px; }
input[type="range"] { appearance: none; width: 160px; height: 20px; margin: 0 -4px; background: linear-gradient(90deg, #2557b8 56%, #aaa 56%) center / 100% 2px no-repeat; }
input[type="range"]::-webkit-slider-thumb { appearance: none; width: 18px; height: 18px; border: 4px solid #fff; border-radius: 50%; background: #8c8c8c; box-shadow: 0 0 3px rgba(0, 0, 0, .4); }

/* overlays */
.watermark { position: absolute; inset: 0; z-index: 5; padding-top: 17px; overflow: hidden; pointer-events: none; color: rgba(50, 50, 50, .17); font: 36px/126px "Noto Sans", sans-serif; }
.watermark div { display: flex; padding-left: 30px; }
.watermark div:nth-child(even) { margin-left: -132px; }
.watermark span { width: 265px; flex: none; }
.notice { position: absolute; left: 975px; top: 783px; z-index: 6; font: 38px/56px "Liberation Mono", monospace; color: #cc0000; pointer-events: none; white-space: nowrap; }
.notice span { font: 400 45px/56px "Noto Sans CJK SC", sans-serif; }
.ime { position: absolute; right: 5px; top: 660px; z-index: 7; display: flex; align-items: center; gap: 5px; height: 38px; padding: 0 10px 0 8px; border-radius: 8px; background: #000; color: #eee; font-family: "Liberation Sans", "Noto Sans CJK SC", sans-serif; box-shadow: 0 1px 4px rgba(0, 0, 0, .6); font-size: 20px; }
.ime svg { width: 16px; height: 18px; }
.ime span { color: #999; font-size: 18px; }
```
FILE: watermark.js
```js
// Fill the window with staggered rows of the site mark.
const layer = document.querySelector('.watermark');
const rows = Math.ceil((window.innerHeight - 18) / 126);
const columns = Math.ceil((window.innerWidth + 132) / 265);
for (let r = 0; r < rows; r++) {
  const row = document.createElement('div');
  for (let c = 0; c < columns; c++) {
    const mark = document.createElement('span');
    mark.textContent = 'code51.cn';
    row.append(mark);
  }
  layer.append(row);
}
```
